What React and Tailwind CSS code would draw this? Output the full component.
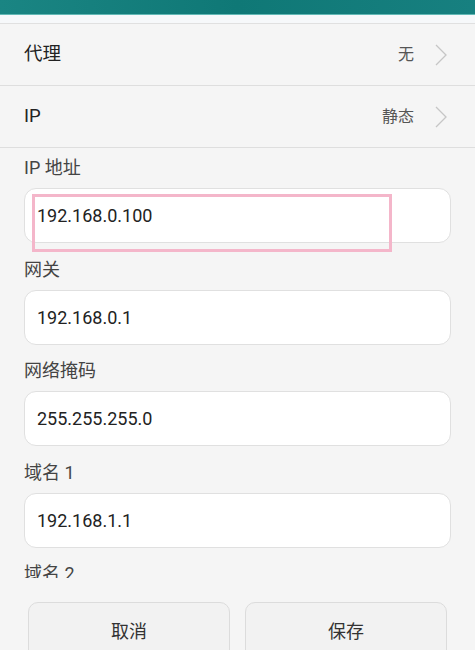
import React from "react";

const fields = [
  { label: "IP 地址", value: "192.168.0.100", marked: true },
  { label: "网关", value: "192.168.0.1" },
  { label: "网络掩码", value: "255.255.255.0" },
  { label: "域名 1", value: "192.168.1.1" },
  { label: "域名 2", value: "" },
];

const Chevron = () => (
  <svg width="12" height="22" viewBox="0 0 12 22" fill="none">
    <polyline points="1,1 11,11 1,21" stroke="#c6c6c6" strokeWidth="1.3" strokeLinejoin="miter" />
  </svg>
);

const SettingRow = ({ title, value }) => (
  <div className="flex items-center h-[62px] pl-6 pr-7 border-b border-[#dedede]">
    <span className="flex-1 text-[18.5px] text-[#222]">{title}</span>
    <span className="text-[16px] text-[#555] mr-[21px]">{value}</span>
    <Chevron />
  </div>
);

const App = () => {
  return (
    <div
      className="h-[674px] flex flex-col bg-[#f5f5f5] overflow-hidden"
      style={{ fontFamily: 'Roboto, "Noto Sans CJK SC", sans-serif' }}
    >
      {/* status / action bar edge */}
      <div className="h-[15px] shrink-0 bg-gradient-to-r from-[#1a8583] via-[#0f7876] to-[#178080] border-b border-[#62b8b5]" />
      <div className="h-[9px] shrink-0 bg-[#f6f8fa] border-b border-[#e0e0e0]" />

      <SettingRow title="代理" value="无" />
      <SettingRow title="IP" value="静态" />

      {/* form */}
      <div className="flex-1 min-h-0 overflow-hidden px-6 pt-2 flex flex-col gap-[14.5px]">
        {fields.map((f) => (
          <div key={f.label} className="shrink-0">
            <div className="h-6 leading-6 text-[18px] text-[#444] mb-2">{f.label}</div>
            <div className="relative h-[55px] rounded-[12px] border border-[#e0e0e0] bg-white flex items-center pl-3">
              <span className="text-[18px] text-[#222]">{f.value}</span>
              {f.marked && (
                <div className="absolute left-[7px] top-[5px] w-[360px] h-[58px] border-[3px] border-[#f4b6ca]" />
              )}
            </div>
          </div>
        ))}
      </div>

      {/* footer buttons */}
      <div className="shrink-0 flex gap-[15px] px-7 pt-6 pb-[14px]">
        <button className="flex-1 h-[58px] rounded-[10px] border border-[#dcdcdc] bg-[#f2f2f2] text-[18px] text-[#333]">
          取消
        </button>
        <button className="flex-1 h-[58px] rounded-[10px] border border-[#dcdcdc] bg-[#f2f2f2] text-[18px] text-[#333]">
          保存
        </button>
      </div>
    </div>
  );
};

export default App;
